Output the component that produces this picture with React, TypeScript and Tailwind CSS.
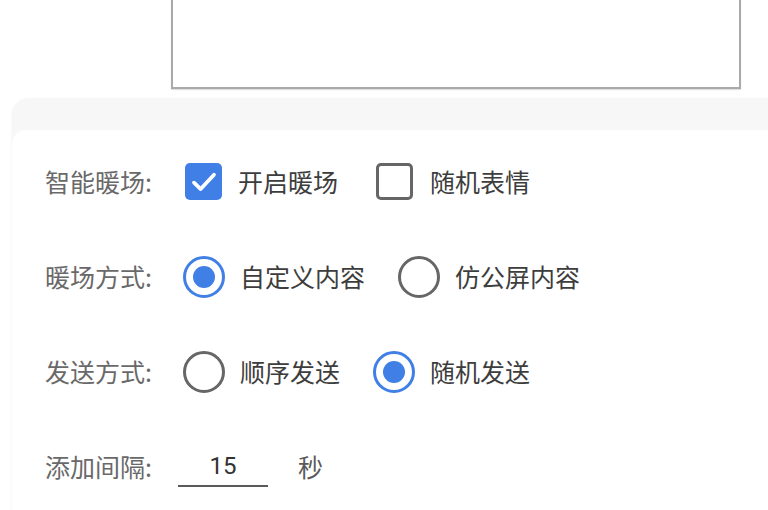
import React, { useState } from 'react';

const font = { fontFamily: '"Noto Sans CJK SC", "Noto Sans", sans-serif' };

const CheckBox: React.FC<{ checked: boolean; onClick: () => void }> = ({ checked, onClick }) => (
  <div
    onClick={onClick}
    className={`w-[37px] h-[37px] rounded-[5px] flex items-center justify-center cursor-pointer ${
      checked ? 'bg-[#3f7fe6]' : 'border-[3px] border-[#666] bg-white'
    }`}
  >
    {checked && (
      <svg viewBox="0 0 24 24" className="w-[32px] h-[32px]" fill="none" stroke="white" strokeWidth="2.8" strokeLinecap="round" strokeLinejoin="round">
        <path d="M4.5 12.5l5 4.8L19.5 6.5" />
      </svg>
    )}
  </div>
);

const Radio: React.FC<{ checked: boolean; onClick: () => void }> = ({ checked, onClick }) => (
  <div
    onClick={onClick}
    className={`w-[42px] h-[42px] rounded-full flex items-center justify-center cursor-pointer border-[3px] ${
      checked ? 'border-[#3f7fe6]' : 'border-[#666]'
    }`}
  >
    {checked && <div className="w-[22px] h-[22px] rounded-full bg-[#3f7fe6]" />}
  </div>
);

export default function App() {
  const [warm, setWarm] = useState(true);
  const [emoji, setEmoji] = useState(false);
  const [mode, setMode] = useState<'custom' | 'screen'>('custom');
  const [send, setSend] = useState<'order' | 'random'>('random');
  const [interval, setInterval] = useState('15');

  return (
    <div className="w-[768px] h-[510px] bg-white overflow-hidden" style={font}>
      {/* Top textarea area */}
      <div className="h-[98px] pl-[171px] pr-[27px]">
        <div className="h-[89px] border-x-2 border-b-2 border-[#a9a9a9] bg-white shadow-[0_1px_1px_rgba(0,0,0,0.12)]" />
      </div>

      {/* Card */}
      <div className="ml-[12px] rounded-tl-[18px] bg-[#f7f7f7] shadow-[-1px_0_2px_rgba(0,0,0,0.03)]">
        <div className="h-[32px]" />
        <div className="bg-white rounded-tl-[14px] pl-[33px] pt-[4px] text-[25px] leading-none">
          {/* 智能暖场 */}
          <div className="h-[95px] flex items-center">
            <span className="w-[140px] text-[#696969]">智能暖场:</span>
            <CheckBox checked={warm} onClick={() => setWarm(!warm)} />
            <span className="ml-[16px] text-[#3d3d3d]">开启暖场</span>
            <div className="ml-[38px]">
              <CheckBox checked={emoji} onClick={() => setEmoji(!emoji)} />
            </div>
            <span className="ml-[17px] text-[#3d3d3d]">随机表情</span>
          </div>

          {/* 暖场方式 */}
          <div className="h-[95px] flex items-center">
            <span className="w-[138px] text-[#696969]">暖场方式:</span>
            <Radio checked={mode === 'custom'} onClick={() => setMode('custom')} />
            <span className="ml-[15px] text-[#3d3d3d]">自定义内容</span>
            <div className="ml-[33px]">
              <Radio checked={mode === 'screen'} onClick={() => setMode('screen')} />
            </div>
            <span className="ml-[15px] text-[#3d3d3d]">仿公屏内容</span>
          </div>

          {/* 发送方式 */}
          <div className="h-[95px] flex items-center">
            <span className="w-[138px] text-[#696969]">发送方式:</span>
            <Radio checked={send === 'order'} onClick={() => setSend('order')} />
            <span className="ml-[15px] text-[#3d3d3d]">顺序发送</span>
            <div className="ml-[33px]">
              <Radio checked={send === 'random'} onClick={() => setSend('random')} />
            </div>
            <span className="ml-[15px] text-[#3d3d3d]">随机发送</span>
          </div>

          {/* 添加间隔 */}
          <div className="h-[95px] flex items-center">
            <span className="w-[133px] text-[#696969]">添加间隔:</span>
            <div className="w-[90px] h-[40px] border-b-2 border-[#5a5a5a] flex items-center justify-center">
              <input
                value={interval}
                onChange={(e) => setInterval(e.target.value)}
                className="w-full text-center text-[24px] text-[#333] bg-transparent outline-none"
                style={{ fontFamily: 'Roboto, "Noto Sans CJK SC", sans-serif' }}
              />
            </div>
            <span className="ml-[30px] text-[#5a5a5a]">秒</span>
          </div>
        </div>
      </div>
    </div>
  );
}
